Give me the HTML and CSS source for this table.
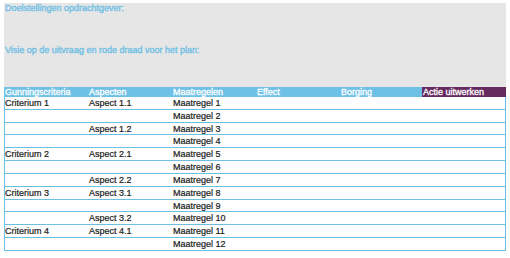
FILE: index.html
```html
<!DOCTYPE html>
<html lang="nl">
<head>
<meta charset="utf-8">
<title>Gunningscriteria</title>
<link rel="stylesheet" href="styles.css">
</head>
<body>
<div class="sheet">
  <div class="intro">
    <p class="intro-line">Doelstellingen opdrachtgever:</p>
    <p class="intro-line intro-line--second">Visie op de uitvraag en rode draad voor het plan:</p>
  </div>
  <div class="row row--head">
    <div class="cell">Gunningscriteria</div>
    <div class="cell">Aspecten</div>
    <div class="cell">Maatregelen</div>
    <div class="cell">Effect</div>
    <div class="cell">Borging</div>
    <div class="cell cell--action">Actie uitwerken</div>
  </div>
  <div class="row"><div class="cell">Criterium 1</div><div class="cell">Aspect 1.1</div><div class="cell">Maatregel 1</div><div class="cell"></div><div class="cell"></div><div class="cell"></div></div>
  <div class="row"><div class="cell"></div><div class="cell"></div><div class="cell">Maatregel 2</div><div class="cell"></div><div class="cell"></div><div class="cell"></div></div>
  <div class="row"><div class="cell"></div><div class="cell">Aspect 1.2</div><div class="cell">Maatregel 3</div><div class="cell"></div><div class="cell"></div><div class="cell"></div></div>
  <div class="row"><div class="cell"></div><div class="cell"></div><div class="cell">Maatregel 4</div><div class="cell"></div><div class="cell"></div><div class="cell"></div></div>
  <div class="row"><div class="cell">Criterium 2</div><div class="cell">Aspect 2.1</div><div class="cell">Maatregel 5</div><div class="cell"></div><div class="cell"></div><div class="cell"></div></div>
  <div class="row"><div class="cell"></div><div class="cell"></div><div class="cell">Maatregel 6</div><div class="cell"></div><div class="cell"></div><div class="cell"></div></div>
  <div class="row"><div class="cell"></div><div class="cell">Aspect 2.2</div><div class="cell">Maatregel 7</div><div class="cell"></div><div class="cell"></div><div class="cell"></div></div>
  <div class="row"><div class="cell">Criterium 3</div><div class="cell">Aspect 3.1</div><div class="cell">Maatregel 8</div><div class="cell"></div><div class="cell"></div><div class="cell"></div></div>
  <div class="row"><div class="cell"></div><div class="cell"></div><div class="cell">Maatregel 9</div><div class="cell"></div><div class="cell"></div><div class="cell"></div></div>
  <div class="row"><div class="cell"></div><div class="cell">Aspect 3.2</div><div class="cell">Maatregel 10</div><div class="cell"></div><div class="cell"></div><div class="cell"></div></div>
  <div class="row"><div class="cell">Criterium 4</div><div class="cell">Aspect 4.1</div><div class="cell">Maatregel 11</div><div class="cell"></div><div class="cell"></div><div class="cell"></div></div>
  <div class="row"><div class="cell"></div><div class="cell"></div><div class="cell">Maatregel 12</div><div class="cell"></div><div class="cell"></div><div class="cell"></div></div>
</div>
</body>
</html>
```

FILE: styles.css
```css
html, body {
  margin: 0;
  padding: 0;
  background: #ffffff;
}

body {
  font-family: "Liberation Sans", Arial, sans-serif;
  font-size: 9px;
  color: #1a1a1a;
  -webkit-text-stroke: 0.2px currentColor;
}

.sheet {
  width: 502px;
  padding: 3px 0 0 4px;
}

/* grey block with the two intro prompts */
.intro {
  height: 84px;
  background: #e6e6e6;
  box-sizing: border-box;
  padding-left: 1px;
}

.intro-line {
  margin: 0;
  line-height: 11px;
  color: #6fc0e4;
  -webkit-text-stroke: 0.35px currentColor;
}

.intro-line--second {
  margin-top: 31px;
}

/* table rows */
.row {
  display: grid;
  grid-template-columns: 84px 84px 84px 84px 82px 84px;
  height: 12.84px;
  box-sizing: border-box;
  border-bottom: 1px solid #6cbee4;
  box-shadow: inset 1px 0 0 #6cbee4, inset -1px 0 0 #6cbee4;
  line-height: 11px;
}

.cell {
  padding: 1px 0 0 1px;
  white-space: nowrap;
  overflow: hidden;
}

.row--head {
  height: 10px;
  line-height: 10px;
  border-bottom: none;
  box-shadow: none;
  background: #6ec1e6;
  color: #ffffff;
  -webkit-text-stroke: 0.3px currentColor;
}

.row--head .cell {
  padding-top: 0;
}

.cell--action {
  background: #652b5f;
}
```
